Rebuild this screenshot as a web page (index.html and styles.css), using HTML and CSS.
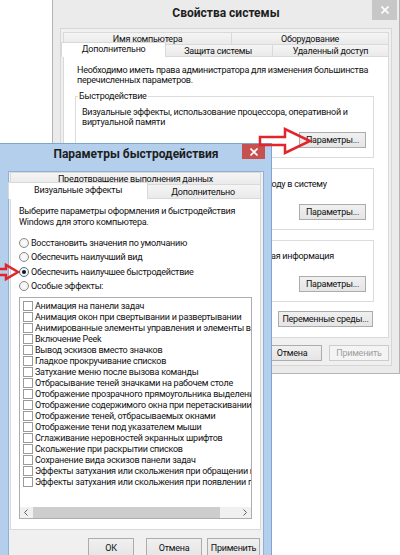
FILE: index.html
```html
<!DOCTYPE html>
<html lang="ru">
<head>
    <meta charset="UTF-8">
    <meta name="viewport" content="width=device-width, initial-scale=1.0">
    <title>Параметры быстродействия</title>
    <link rel="stylesheet" href="styles.css">
</head>
<body>

<div class="desktop">

    <!-- Свойства системы (неактивное окно, позади) -->
    <div class="window sysprops">
        <div class="titlebar">
            <span class="window-title">Свойства системы</span>
            <span class="close-btn">
                <svg width="8" height="8" viewBox="0 0 8 8"><path d="M0.5 0.5 L7.5 7.5 M7.5 0.5 L0.5 7.5"/></svg>
            </span>
        </div>
        <div class="client">
            <div class="tab-row">
                <span class="tab">Имя компьютера</span>
                <span class="tab">Оборудование</span>
            </div>
            <div class="tab-row">
                <span class="tab tab-active">Дополнительно</span>
                <span class="tab">Защита системы</span>
                <span class="tab">Удаленный доступ</span>
            </div>
            <div class="tab-panel">
                <p class="desc note">Необходимо иметь права администратора для изменения большинства<br>перечисленных параметров.</p>

                <fieldset class="group">
                    <legend>Быстродействие</legend>
                    <p class="desc">Визуальные эффекты, использование процессора, оперативной и<br>виртуальной памяти</p>
                    <div class="group-actions"><button class="btn btn-params">Параметры...</button></div>
                </fieldset>

                <fieldset class="group">
                    <legend>Профили пользователей</legend>
                    <p class="desc">Параметры рабочего стола, относящиеся ко входу в систему</p>
                    <div class="group-actions"><button class="btn btn-params">Параметры...</button></div>
                </fieldset>

                <fieldset class="group">
                    <legend>Загрузка и восстановление</legend>
                    <p class="desc">Загрузка и восстановление системы, отладочная информация</p>
                    <div class="group-actions"><button class="btn btn-params">Параметры...</button></div>
                </fieldset>

                <div class="group-actions env-row"><button class="btn btn-env">Переменные среды...</button></div>
            </div>
            <div class="dialog-buttons">
                <button class="btn">ОК</button>
                <button class="btn">Отмена</button>
                <button class="btn" disabled>Применить</button>
            </div>
        </div>
    </div>

    <!-- Параметры быстродействия (активное окно) -->
    <div class="window perf">
        <div class="titlebar">
            <span class="window-title">Параметры быстродействия</span>
            <span class="close-btn">
                <svg width="8" height="8" viewBox="0 0 8 8"><path d="M0.5 0.5 L7.5 7.5 M7.5 0.5 L0.5 7.5"/></svg>
            </span>
        </div>
        <div class="client">
            <div class="tab-row">
                <span class="tab">Предотвращение выполнения данных</span>
            </div>
            <div class="tab-row">
                <span class="tab tab-active">Визуальные эффекты</span>
                <span class="tab">Дополнительно</span>
            </div>
            <div class="tab-panel">
                <p class="intro">Выберите параметры оформления и быстродействия<br>Windows для этого компьютера.</p>

                <div class="radio-list">
                    <label class="radio"><span class="radio-mark"></span>Восстановить значения по умолчанию</label>
                    <label class="radio"><span class="radio-mark"></span>Обеспечить наилучший вид</label>
                    <label class="radio radio-checked"><span class="radio-mark"></span>Обеспечить наилучшее быстродействие</label>
                    <label class="radio"><span class="radio-mark"></span>Особые эффекты:</label>
                </div>

                <div class="listbox">
                    <ul class="list-items">
                        <li><span class="check"></span>Анимация на панели задач</li>
                        <li><span class="check"></span>Анимация окон при свертывании и развертывании</li>
                        <li><span class="check"></span>Анимированные элементы управления и элементы внутри окна</li>
                        <li><span class="check"></span>Включение Peek</li>
                        <li><span class="check"></span>Вывод эскизов вместо значков</li>
                        <li><span class="check"></span>Гладкое прокручивание списков</li>
                        <li><span class="check"></span>Затухание меню после вызова команды</li>
                        <li><span class="check"></span>Отбрасывание теней значками на рабочем столе</li>
                        <li><span class="check"></span>Отображение прозрачного прямоугольника выделения</li>
                        <li><span class="check"></span>Отображение содержимого окна при перетаскивании</li>
                        <li><span class="check"></span>Отображение теней, отбрасываемых окнами</li>
                        <li><span class="check"></span>Отображение тени под указателем мыши</li>
                        <li><span class="check"></span>Сглаживание неровностей экранных шрифтов</li>
                        <li><span class="check"></span>Скольжение при раскрытии списков</li>
                        <li><span class="check"></span>Сохранение вида эскизов панели задач</li>
                        <li><span class="check"></span>Эффекты затухания или скольжения при обращении к меню</li>
                        <li><span class="check"></span>Эффекты затухания или скольжения при появлении подсказок</li>
                    </ul>
                    <div class="hscroll">
                        <span class="hscroll-btn">
                            <svg width="4" height="7" viewBox="0 0 4 7"><path d="M3.5 0.5 L0.5 3.5 L3.5 6.5"/></svg>
                        </span>
                        <span class="hscroll-thumb"></span>
                        <span class="hscroll-track"></span>
                        <span class="hscroll-btn">
                            <svg width="4" height="7" viewBox="0 0 4 7"><path d="M0.5 0.5 L3.5 3.5 L0.5 6.5"/></svg>
                        </span>
                    </div>
                </div>
            </div>
            <div class="dialog-buttons">
                <button class="btn btn-ok">ОК</button>
                <button class="btn btn-cancel">Отмена</button>
                <button class="btn btn-apply">Применить</button>
            </div>
        </div>
    </div>

    <!-- red pointer arrows drawn over both windows -->
    <svg class="marks" width="400" height="555" viewBox="0 0 400 555">
        <polygon points="260,137 285,137 285,129 310,141 285,153 285,145 260,145"/>
        <polygon points="-10,269 6,269 6,265 18,272 6,279 6,275 -10,275"/>
    </svg>

</div>

</body>
</html>
```

FILE: styles.css
```css
/* --- Basic Reset --- */
* {
    box-sizing: border-box;
}

body {
    margin: 0;
    background: #ffffff;
    font-family: Roboto, "Liberation Sans", Arial, sans-serif;
    font-size: 9px;
    letter-spacing: -0.25px;
    color: #111111;
}

p {
    margin: 0;
}

button {
    font: inherit;
    letter-spacing: inherit;
    color: inherit;
}

.desktop {
    position: relative;
    width: 400px;
    height: 555px;
    overflow: hidden;
    background: #ffffff;
}

/* --- Window frame --- */
.window {
    position: absolute; /* windows sit freely on the desktop */
    display: flex;
    flex-direction: column;
    border: 1px solid #b3b3b3;
    background: #ebebeb;
}

.sysprops {
    left: 52px;
    top: -1px;
    width: 348px;
    height: 375px;
    padding: 0 7px 7px;
}

.perf {
    left: -1px;
    top: 143px;
    width: 273px;
    height: 430px;
    padding: 0 7px 0 8px;
    background: #b3cfec;
    border-color: #7ea5d0;
}

/* --- Title bar --- */
.titlebar {
    position: relative;
    flex: none;
    height: 28px;
    display: flex;
    justify-content: center;
    align-items: flex-start;
}

.perf .titlebar {
    height: 27px;
}

.window-title {
    font-size: 12px;
    font-weight: bold;
    line-height: 16px;
    letter-spacing: 0;
    color: #1e1e1e;
}

.sysprops .window-title {
    padding-top: 5px;
}

.perf .window-title {
    padding-top: 2px;
}

.close-btn {
    position: absolute; /* hangs over the right end of the title bar */
    top: 0;
    display: flex;
    align-items: center;
    justify-content: center;
}

.close-btn svg {
    stroke: #ffffff;
    stroke-width: 1.6;
}

.sysprops .close-btn {
    right: -5px;
    width: 25px;
    height: 20px;
    background: #c7c7c7;
}

.perf .close-btn {
    right: -1px;
    width: 23px;
    height: 15px;
    background: #c75050;
}

/* --- Client area --- */
.client {
    flex: 1;
    display: flex;
    flex-direction: column;
    background: #f0f0f0;
    border: 1px solid #d6d6d6;
    padding: 3px 2px;
}

.perf .client {
    border-color: #8fb1d8;
    padding: 0 2px 0 1px;
}

/* --- Tabs --- */
.tab-row {
    display: flex;
    align-items: flex-end;
}

.tab-row + .tab-row {
    margin-top: -2px;
}

.tab {
    flex: 1 1 auto;
    height: 12px;
    padding: 0 8px;
    display: flex;
    align-items: center;
    justify-content: center;
    white-space: nowrap;
    border: 1px solid #d9d9d9;
    border-bottom: none;
    background: linear-gradient(#f5f5f5, #eaeaea);
}

.tab + .tab {
    border-left: none;
}

.perf .tab-row + .tab-row .tab {
    height: 14px;
}

.tab.tab-active {
    position: relative;
    z-index: 1;
    height: 15px;
    margin: 0 -2px -1px;
    padding-bottom: 2px;
    background: #ffffff;
    border-left: 1px solid #d9d9d9;
}

.perf .tab-row + .tab-row .tab.tab-active {
    height: 17px;
}

.tab-panel {
    flex: none;
    background: #ffffff;
    border: 1px solid #d9d9d9;
}

/* --- System properties page --- */
.sysprops .tab-panel {
    padding: 8px 14px 10px 11px;
}

.desc {
    line-height: 10px;
    white-space: nowrap;
}

.note {
    margin-left: 2px;
}

.group {
    margin: 5px 0 0;
    padding: 5px 7px 9px 6px;
    border: 1px solid #dcdcdc;
    min-width: 0;
}

.note + .group {
    margin-top: 6px;
}

.group legend {
    margin-left: -4px;
    padding: 0 1px;
    line-height: 11px;
}

.group .desc {
    height: 20px;
}

.group-actions {
    display: flex;
    justify-content: flex-end;
    margin-top: 5px;
}

.env-row {
    margin-top: 9px;
    padding-right: 1px;
}

/* --- Buttons --- */
.btn {
    height: 16px;
    padding: 0;
    border: 1px solid #acacac;
    background: linear-gradient(#f0f0f0, #e5e5e5);
    line-height: 14px;
    text-align: center;
    white-space: nowrap;
}

.btn:disabled {
    color: #a0a0a0;
    border-color: #cccccc;
    background: #f4f4f4;
}

.btn-params {
    width: 67px;
}

.btn-env {
    width: 95px;
}

.dialog-buttons {
    display: flex;
    justify-content: flex-end;
    gap: 7px;
    margin-top: 7px;
}

.dialog-buttons .btn {
    width: 60px;
}

.perf .dialog-buttons {
    gap: 5px;
    margin-top: 8px;
    padding-right: 1px;
}

.perf .dialog-buttons .btn {
    height: 20px;
}

.perf .dialog-buttons .btn-ok {
    width: 46px;
    margin-right: 7px;
}

.perf .dialog-buttons .btn-cancel {
    width: 56px;
}

.perf .dialog-buttons .btn-apply {
    width: 53px;
}

/* --- Visual effects page --- */
.perf .tab-panel {
    padding: 7px 8px 10px;
}

.intro {
    line-height: 11px;
    white-space: nowrap;
}

.radio-list {
    margin-top: 7.5px;
}

.radio {
    display: flex;
    align-items: center;
    height: 14.5px;
    white-space: nowrap;
}

.radio-mark {
    flex: none;
    width: 10px;
    height: 10px;
    margin-right: 2px;
    border: 1px solid #8b8b8b;
    border-radius: 50%;
    background: radial-gradient(#ffffff, #e9e9e9);
    display: flex;
    align-items: center;
    justify-content: center;
}

.radio-checked .radio-mark {
    border-color: #4d6f93;
}

.radio-checked .radio-mark::after {
    content: "";
    width: 4px;
    height: 4px;
    border-radius: 50%;
    background: #151515;
}

.listbox {
    margin-top: 3.5px;
    height: 222px;
    border: 1px solid #abadb3;
    background: #ffffff;
    display: flex;
    flex-direction: column;
}

.list-items {
    flex: 1;
    margin: 0;
    padding: 2px 0 0 3px;
    list-style: none;
    overflow: hidden;
}

.list-items li {
    display: flex;
    align-items: center;
    height: 11px;
    white-space: nowrap;
}

.check {
    flex: none;
    width: 10px;
    height: 10px;
    margin-right: 2px;
    border: 1px solid #9a9a9a;
    background: #ffffff;
}

/* --- Horizontal scroll bar --- */
.hscroll {
    flex: none;
    height: 11px;
    display: flex;
    background: #f0f0f0;
}

.hscroll-btn {
    flex: none;
    width: 12px;
    display: flex;
    align-items: center;
    justify-content: center;
}

.hscroll-btn svg {
    fill: none;
    stroke: #606060;
    stroke-width: 1;
}

.hscroll-thumb {
    flex: none;
    width: 187px;
    margin-left: 1px;
    background: #cdcdcd;
}

.hscroll-track {
    flex: 1;
}

/* --- Red pointer arrows --- */
.marks {
    position: absolute; /* drawn on top of everything */
    left: 0;
    top: 0;
    pointer-events: none;
}

.marks polygon {
    fill: none;
    stroke: #e2252c;
    stroke-width: 2.5;
    stroke-linejoin: miter;
}
```
